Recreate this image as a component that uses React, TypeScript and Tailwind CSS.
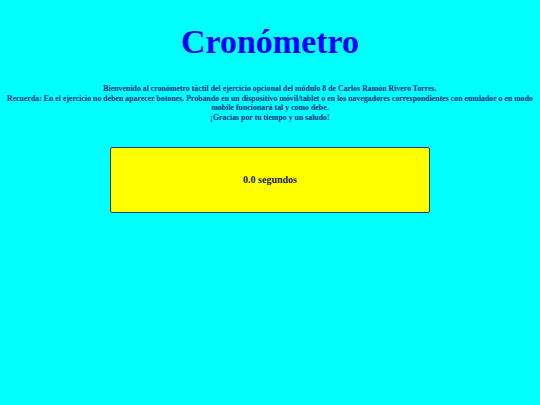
import React, { useState } from 'react';

const App: React.FC = () => {
  const [seconds] = useState(0);

  return (
    <div className="min-h-screen w-full bg-[#00ffff] font-['Liberation_Serif','Times_New_Roman',serif]">
      <h1 className="pt-[22px] text-center text-[34px] leading-[40px] font-bold text-[#0000ff]">Cronómetro</h1>

      <p className="mt-[22px] text-center text-[7.85px] leading-[9.7px] font-bold text-[#0a2a80]">
        Bienvenido al cronómetro táctil del ejercicio opcional del módulo 8 de Carlos Ramón Rivero Torres.
        <br />
        Recuerda: En el ejercicio no deben aparecer botones. Probando en un dispositivo móvil/tablet o en los navegadores correspondientes con emulador o en modo mobile funcionará tal y como debe.
        <br />
        ¡Gracias por tu tiempo y un saludo!
      </p>

      <div className="mx-auto mt-[24px] flex h-[66px] w-[320px] items-center justify-center rounded-[2px] border border-[#1f3f6f] bg-[#ffff00]">
        <span className="text-[10px] font-bold text-[#191960]">{seconds.toFixed(1)} segundos</span>
      </div>
    </div>
  );
};

export default App;
